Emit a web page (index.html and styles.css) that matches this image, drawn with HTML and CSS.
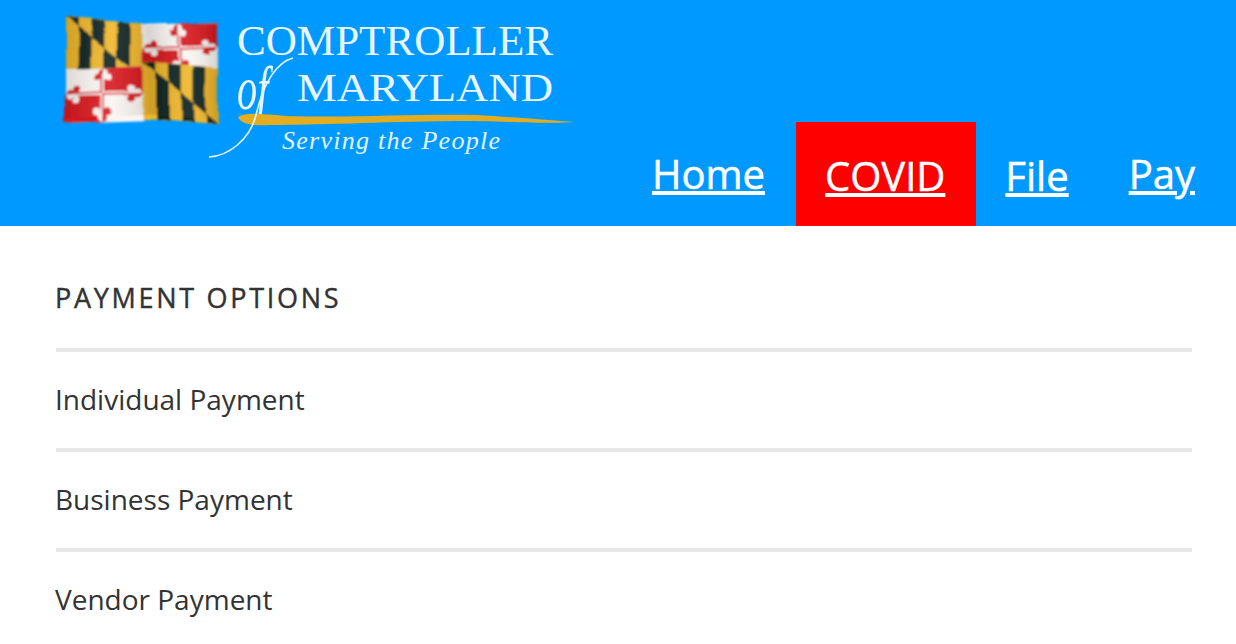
FILE: index.html
```html
<!DOCTYPE html>
<html>
<head>
  <meta charset="UTF-8">
  <title>Payment Options</title>
  <link rel="stylesheet" href="styles.css">
</head>
<body>

<header class="site-header">
  <a class="logo" href="#">
    <svg class="logo-art" viewBox="0 0 520 160" width="520" height="160" role="img" aria-label="Comptroller of Maryland">
      <defs>
        <clipPath id="upperTri"><polygon points="0,0 78,0 78,54"/></clipPath>
        <clipPath id="lowerTri"><polygon points="0,0 78,54 0,54"/></clipPath>
        <clipPath id="whiteQuarters"><rect width="39" height="27"/><rect x="39" y="27" width="39" height="27"/></clipPath>
        <clipPath id="redQuarters"><rect x="39" width="39" height="27"/><rect y="27" width="39" height="27"/></clipPath>
        <g id="crossShape">
          <path d="M8 27H70M39 4V50" stroke-width="3.5" fill="none" stroke="currentColor"/>
          <g fill="currentColor">
            <circle cx="6" cy="27" r="4.5"/><circle cx="72" cy="27" r="4.5"/>
            <circle cx="39" cy="5" r="4.5"/><circle cx="39" cy="49" r="4.5"/>
            <circle cx="12" cy="22" r="3.5"/><circle cx="12" cy="32" r="3.5"/>
            <circle cx="66" cy="22" r="3.5"/><circle cx="66" cy="32" r="3.5"/>
            <circle cx="34" cy="10" r="3.5"/><circle cx="44" cy="10" r="3.5"/>
            <circle cx="34" cy="44" r="3.5"/><circle cx="44" cy="44" r="3.5"/>
          </g>
        </g>
        <g id="checks">
          <rect width="78" height="54" fill="#f0b72a"/>
          <g clip-path="url(#upperTri)" fill="#0f2423">
            <rect x="0" width="13" height="54"/><rect x="26" width="13" height="54"/><rect x="52" width="13" height="54"/>
          </g>
          <g clip-path="url(#lowerTri)" fill="#0f2423">
            <rect x="13" width="13" height="54"/><rect x="39" width="13" height="54"/><rect x="65" width="13" height="54"/>
          </g>
        </g>
        <g id="crossland">
          <rect width="78" height="54" fill="#fbf6f2"/>
          <rect x="39" width="39" height="27" fill="#d8181f"/>
          <rect y="27" width="39" height="27" fill="#d8181f"/>
          <g clip-path="url(#whiteQuarters)" color="#d8181f"><use href="#crossShape"/></g>
          <g clip-path="url(#redQuarters)" color="#fbf6f2"><use href="#crossShape"/></g>
        </g>
        <linearGradient id="folds" x1="0" x2="1" y1="0" y2="0">
          <stop offset="0" stop-color="#000" stop-opacity=".12"/>
          <stop offset=".3" stop-color="#fff" stop-opacity=".1"/>
          <stop offset=".55" stop-color="#000" stop-opacity=".14"/>
          <stop offset=".8" stop-color="#fff" stop-opacity=".08"/>
          <stop offset="1" stop-color="#000" stop-opacity=".15"/>
        </linearGradient>
        <filter id="wavy" x="-5%" y="-8%" width="110%" height="116%">
          <feTurbulence type="fractalNoise" baseFrequency="0.014 0.02" numOctaves="1" seed="4"/>
          <feDisplacementMap in="SourceGraphic" scale="12" xChannelSelector="G" yChannelSelector="R"/>
          <feGaussianBlur stdDeviation="0.8"/>
        </filter>
      </defs>

      <g filter="url(#wavy)">
        <g transform="translate(10 18) scale(.98)">
          <use href="#checks" transform="skewY(4)"/>
          <use href="#crossland" transform="translate(77 5) skewY(-2)"/>
          <use href="#crossland" transform="translate(0 52) skewY(-2)"/>
          <use href="#checks" transform="translate(77 45) skewY(5) scale(1 1.05)"/>
          <path d="M0 0 L78 6 L155 3 V106 L78 97 L0 102Z" fill="url(#folds)"/>
        </g>
      </g>

      <g class="logo-text">
        <text x="181" y="55" font-size="43" textLength="316" lengthAdjust="spacingAndGlyphs">COMPTROLLER</text>
        <text x="241" y="101" font-size="41" textLength="256" lengthAdjust="spacingAndGlyphs">MARYLAND</text>
        <text class="logo-of" transform="translate(181 109) scale(.65 1)" font-size="62">of</text>
        <text class="logo-of" x="226" y="149" font-size="26" textLength="218" lengthAdjust="spacing">Serving the People</text>
      </g>
      <path d="M182 117 C190 112 205 114 230 116 C300 118 350 114 420 115 C470 118 500 121 518 122 C500 124 440 121 400 121 C320 122 260 125 215 125 C195 126 185 124 182 117Z" fill="#e3ad1f"/>
      <path d="M237 58 C222 62 208 80 200 115 C194 140 172 156 153 157" fill="none" stroke="#e8f6ff" stroke-width="1.6"/>
    </svg>
  </a>

  <nav class="main-nav">
    <a class="nav-item nav-high" href="#">Home</a>
    <a class="nav-item nav-alert" href="#">COVID</a>
    <a class="nav-item" href="#">File</a>
    <a class="nav-item nav-high" href="#">Pay</a>
  </nav>
</header>

<main class="payment-menu">
  <h2 class="menu-title">PAYMENT OPTIONS</h2>
  <a class="menu-row" href="#">Individual Payment</a>
  <a class="menu-row" href="#">Business Payment</a>
  <a class="menu-row" href="#">Vendor Payment</a>
</main>

</body>
</html>
```

FILE: styles.css
```css
html, body {
  margin: 0;
  padding: 0;
  background: #fff;
  overflow: hidden;
  font-family: "Open Sans", Arial, sans-serif;
  color: #333;
}

.site-header {
  display: flex;
  justify-content: space-between;
  align-items: flex-end;
  height: 226px;
  background: #0099ff;
}

.logo {
  display: block;
  align-self: flex-start;
  margin-left: 56px;
}

.logo-art {
  display: block;
}

.logo-text text {
  font-family: "Liberation Serif", "Times New Roman", serif;
  fill: #e8f6ff;
}

.logo-text .logo-of {
  font-style: italic;
}

.main-nav {
  display: flex;
  align-items: flex-end;
  padding-right: 10px;
}

.nav-item {
  display: block;
  height: 104px;
  box-sizing: border-box;
  padding: 26px 31px 0 29px;
  font-size: 40px;
  line-height: 56px;
  color: #fff;
  text-decoration: underline;
  text-decoration-thickness: 4px;
  -webkit-text-stroke: 0.5px #fff;
}

.nav-high {
  padding-top: 24px;
}

.nav-alert {
  background: #f00;
}

.payment-menu {
  padding: 0 44px 0 56px;
}

.menu-title {
  margin: 0;
  height: 122px;
  box-sizing: border-box;
  padding-top: 52px;
  font-size: 27px;
  line-height: 40px;
  font-weight: 400;
  letter-spacing: 2.7px;
  text-indent: -1px;
  -webkit-text-stroke: 0.4px #333;
}

.menu-row {
  display: block;
  height: 100px;
  box-sizing: border-box;
  border-top: 4px solid #e8e8e8;
  padding-top: 27px;
  font-size: 28px;
  line-height: 40px;
  text-indent: -1px;
  color: #333;
  text-decoration: none;
}
```
